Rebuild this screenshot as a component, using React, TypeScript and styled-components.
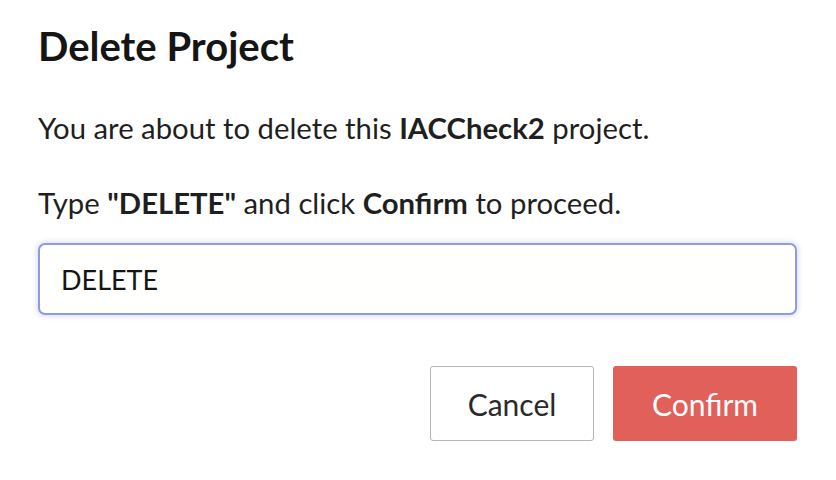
import React from "react";
import styled, { createGlobalStyle } from "styled-components";

const GlobalStyle = createGlobalStyle`
  html, body {
    margin: 0;
    padding: 0;
    background: #ffffff;
    font-family: Lato, "Noto Sans", sans-serif;
    color: #1b1b1b;
  }
`;

const Dialog = styled.div`
  width: 836px;
  height: 480px;
  box-sizing: border-box;
  padding: 22px 39px 0 38px;
  display: flex;
  flex-direction: column;
`;

const Title = styled.h1`
  margin: 0;
  font-size: 40px;
  font-weight: 700;
  line-height: 48px;
  color: #151515;
`;

const Text = styled.p`
  margin: 0;
  font-size: 29.3px;
  line-height: 36px;
  color: #1f1f1f;
`;

const Intro = styled(Text)`
  margin-top: 40px;
`;

const Instruction = styled(Text)`
  margin-top: 39px;
`;

const Input = styled.input`
  margin-top: 22px;
  height: 72px;
  box-sizing: border-box;
  width: 100%;
  padding: 0 21px;
  border: 2px solid #8f9be0;
  border-radius: 7px;
  box-shadow: 0 0 4px 2px rgba(140, 150, 240, 0.25);
  background: #fffffd;
  font-family: inherit;
  font-size: 27px;
  color: #151515;
  outline: none;
`;

const Actions = styled.div`
  margin-top: 51px;
  display: flex;
  justify-content: flex-end;
  gap: 19px;
`;

const Button = styled.button<{ $primary?: boolean }>`
  height: 75px;
  width: ${(p) => (p.$primary ? "184px" : "164px")};
  box-sizing: border-box;
  border-radius: 3px;
  font-family: inherit;
  font-size: 30px;
  cursor: pointer;
  border: ${(p) => (p.$primary ? "none" : "1px solid #b5b5b5")};
  background: ${(p) => (p.$primary ? "#e1605a" : "#ffffff")};
  color: ${(p) => (p.$primary ? "#ffffff" : "#2a2a2a")};
`;

const App = () => {
  return (
    <>
      <GlobalStyle />
      <Dialog>
        <Title>Delete Project</Title>
        <Intro>
          You are about to delete this <b>IACCheck2</b> project.
        </Intro>
        <Instruction>
          Type <b>"DELETE"</b> and click <b>Confirm</b> to proceed.
        </Instruction>
        <Input defaultValue="DELETE" />
        <Actions>
          <Button>Cancel</Button>
          <Button $primary>Confirm</Button>
        </Actions>
      </Dialog>
    </>
  );
};

export default App;
